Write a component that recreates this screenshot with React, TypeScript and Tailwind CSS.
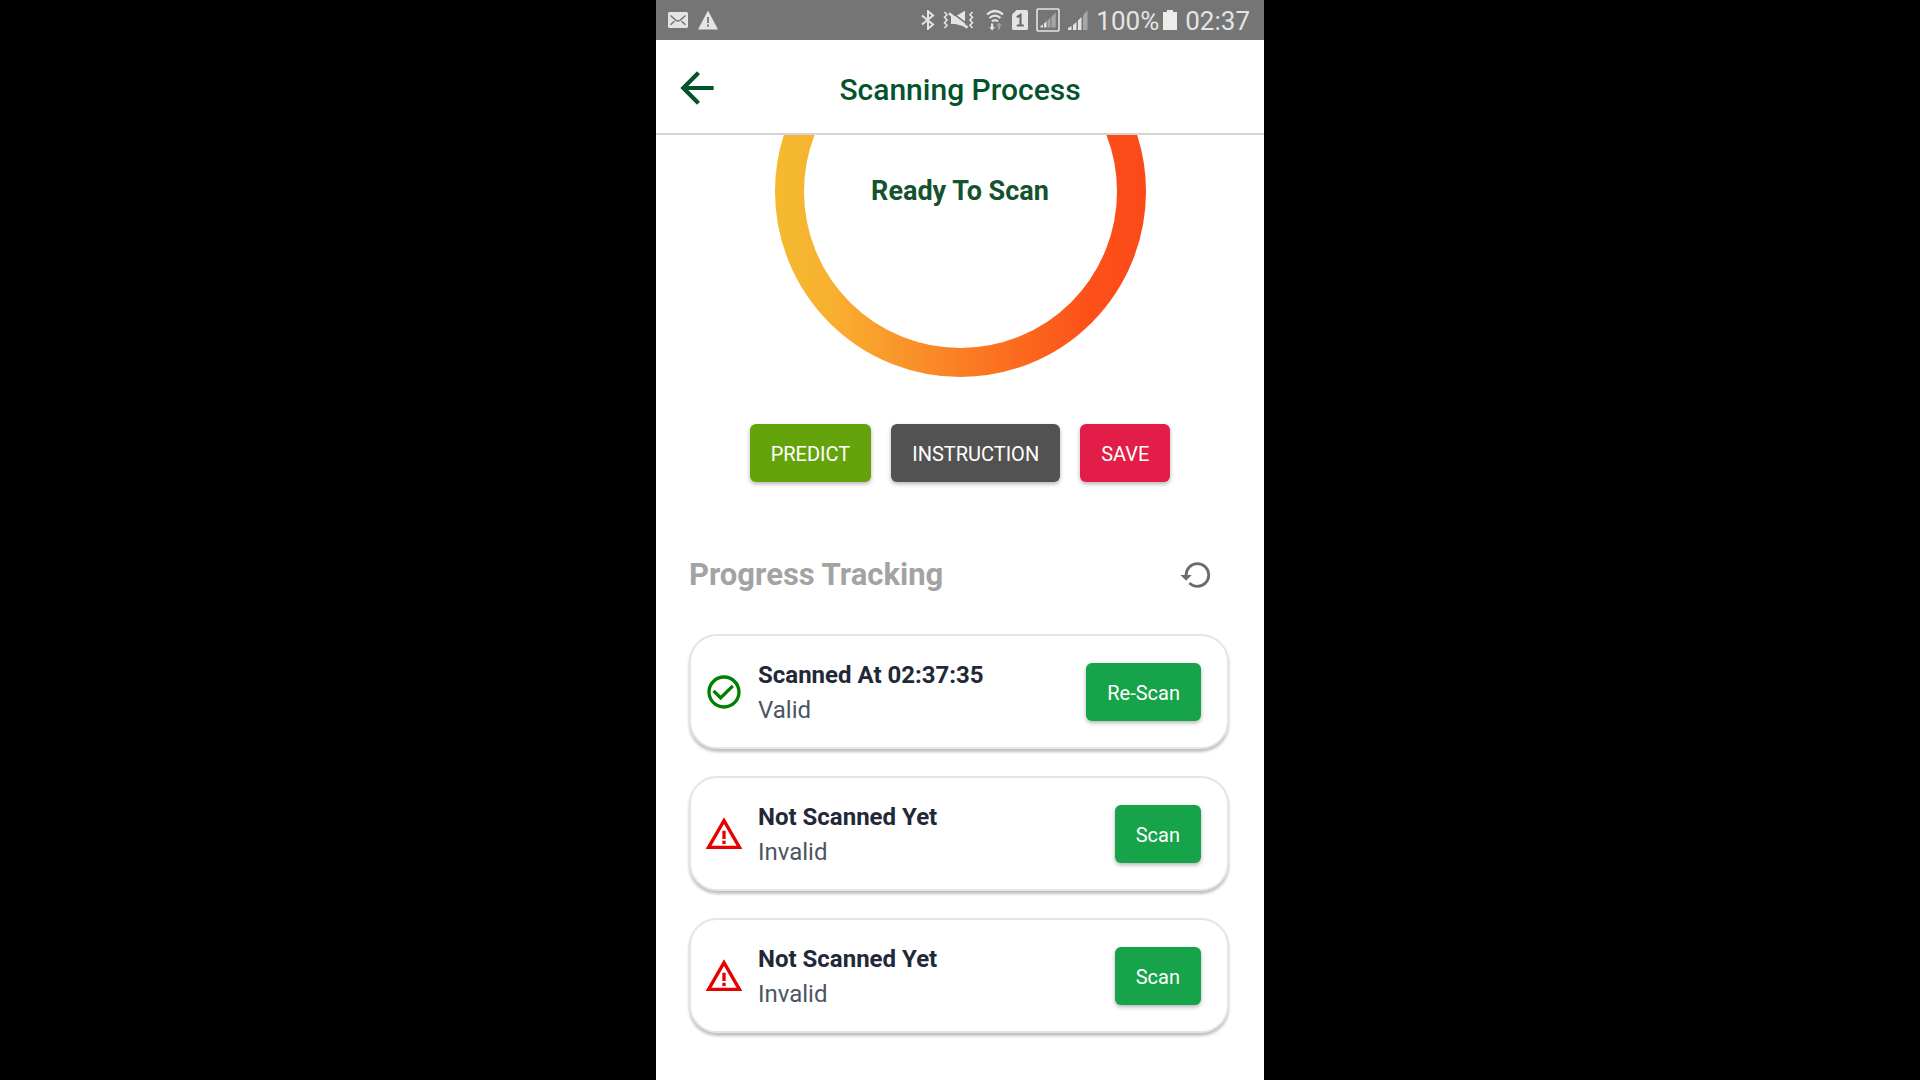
import React from "react";
import { MdArrowBack, MdCheckCircleOutline, MdWarningAmber } from "react-icons/md";

type Scan = { id: number; title: string; status: string; valid: boolean; action: string };

const scans: Scan[] = [
  { id: 1, title: "Scanned At 02:37:35", status: "Valid", valid: true, action: "Re-Scan" },
  { id: 2, title: "Not Scanned Yet", status: "Invalid", valid: false, action: "Scan" },
  { id: 3, title: "Not Scanned Yet", status: "Invalid", valid: false, action: "Scan" },
];

function MailIcon() {
  return (
    <svg viewBox="0 0 20 16" className="h-4 w-5" aria-hidden="true">
      <rect width="20" height="16" rx="1.5" fill="#e4e4e4" />
      <path d="M2.5 3.5 8 8.3q2 1.2 4 0l5.5-4.8M2.5 12.8l4-3.6M17.5 12.8l-4-3.6" fill="none" stroke="#757575" strokeWidth="1.5" />
    </svg>
  );
}

function AlertIcon() {
  return (
    <svg viewBox="0 0 20 20" className="size-5" aria-hidden="true">
      <path d="M10 .5 20 19.5H0Z" fill="#e4e4e4" />
      <path d="M10 7v6M10 14.5v2.2" stroke="#757575" strokeWidth="1.8" />
    </svg>
  );
}

function BluetoothIcon() {
  return (
    <svg viewBox="0 0 14 20" className="h-5 w-3.5" aria-hidden="true">
      <path d="m1 5.5 11 9-5 4.3V1.2l5 4.3-11 9" fill="none" stroke="#e4e4e4" strokeWidth="2" />
    </svg>
  );
}

function MuteVibrateIcon() {
  return (
    <svg viewBox="0 0 31 20" className="h-5 w-[31px]" aria-hidden="true">
      <g fill="none" stroke="#e4e4e4" strokeWidth="1.6">
        <path d="m1.5 2 2.5 2.7-2.5 2.6L4 10l-2.5 2.7L4 15.3 1.5 18" />
        <path d="M29.5 2 27 4.7l2.5 2.6L27 10l2.5 2.7-2.5 2.6 2.5 2.7" />
      </g>
      <path d="M8 6h5L22 .8v16L12.500 14H8Z" fill="#e4e4e4" />
      <path d="M8.200 2.200 25 14.600" stroke="#757575" strokeWidth="1.6" />
      <path d="M6 3.200 24.500 17.800" stroke="#e4e4e4" strokeWidth="2.6" />
    </svg>
  );
}

function WifiIcon() {
  return (
    <svg viewBox="0 0 18 22" className="h-[22px] w-[18px]" aria-hidden="true">
      <g fill="none" stroke="#e4e4e4" strokeWidth="2.2">
        <path d="M1 5.5q8-7 16 0M3.5 9q5.5-4.800 11 0M6 12.400q3-2.600 6 0" />
      </g>
      <path d="M5 14.500h2.200v3.500h1.800L6.100 21.500 3.200 18H5Z" fill="#e4e4e4" />
      <path d="M12 20.500h2.200V17H16l-2.900-3.500-2.900 3.500H12Z" fill="#a0a0a0" />
    </svg>
  );
}

function SimIcon() {
  return (
    <svg viewBox="0 0 16 20" className="h-5 w-4" aria-hidden="true">
      <path d="M4.5 0H14.5Q16 0 16 1.5v17q0 1.5-1.5 1.5h-13Q0 20 0 18.5V4.5Z" fill="#e4e4e4" />
      <path d="M4.8 7.2 8.5 5V15.5M4.8 15.5h7" fill="none" stroke="#6a6a6a" strokeWidth="2.2" />
    </svg>
  );
}

function BoxedSignalIcon() {
  return (
    <svg viewBox="0 0 24 24" className="size-6" aria-hidden="true">
      <rect x="1" y="1" width="22" height="22" rx="1" fill="none" stroke="#e4e4e4" strokeWidth="1.6" />
      <path d="M4.5 19.5v-1.5l2.5-1.5v3ZM8 19.5V15.5l2.5-2.3v6.3Z" fill="#e4e4e4" />
      <path d="M11.5 19.5v-7l3-2.7v9.7ZM15.5 19.5V8.8l4.2-4.3v15Z" fill="#a6a6a6" />
    </svg>
  );
}

function SignalIcon() {
  return (
    <svg viewBox="0 0 20 20" className="size-5" aria-hidden="true">
      <path d="M0 20v-2l3.5-2V20ZM5 20v-5l3.5-3V20ZM10 20V10.5l3.5-3.5V20Z" fill="#e4e4e4" />
      <path d="M15 20V5.5L19.5 0V20Z" fill="#a6a6a6" />
    </svg>
  );
}

function BatteryIcon() {
  return (
    <svg viewBox="0 0 14 20" className="h-5 w-3.5" aria-hidden="true">
      <path d="M4 0h6v2h4v18H0V2h4Z" fill="#ececec" />
    </svg>
  );
}

function RestoreIcon() {
  return (
    <svg viewBox="0 0 24 24" className="size-[34px]" fill="#6b6b6b" aria-hidden="true">
      <path d="M13 3A9 9 0 0 0 4 12H1L4.89 15.89 4.96 16.03 9 12H6A7 7 0 0 1 13 5 7 7 0 0 1 20 12 7 7 0 0 1 13 19C11.07 19 9.32 18.21 8.06 16.94L6.64 18.36C8.27 20 10.5 21 13 21A9 9 0 0 0 22 12 9 9 0 0 0 13 3Z" />
    </svg>
  );
}

function StatusBar() {
  return (
    <div className="flex h-10 shrink-0 items-center justify-between bg-[#757575] pr-3.5 pl-3 text-[#e4e4e4]">
      <div className="flex items-center gap-2.5">
        <MailIcon />
        <AlertIcon />
      </div>
      <div className="flex items-center">
        <div className="mr-2 flex items-center gap-2">
          <div className="mr-1 flex items-center gap-2">
            <BluetoothIcon />
            <MuteVibrateIcon />
          </div>
          <WifiIcon />
          <SimIcon />
          <BoxedSignalIcon />
          <SignalIcon />
        </div>
        <span className="pt-0.5 text-[26px] leading-9">100%</span>
        <span className="mr-2 ml-1">
          <BatteryIcon />
        </span>
        <span className="pt-0.5 text-[26px] leading-9">02:37</span>
      </div>
    </div>
  );
}

function Header() {
  return (
    <header className="grid h-[95px] shrink-0 grid-cols-[50px_1fr_50px] items-center border-b-2 border-[#d4d4d4] px-4 pt-0.5">
      <button type="button" aria-label="Back" className="text-[#04532b]">
        <MdArrowBack className="size-[50px]" />
      </button>
      <h1 className="pt-1 text-center text-[30px] leading-9 font-medium text-[#04532b]">Scanning Process</h1>
    </header>
  );
}

function ProgressRing() {
  return (
    <div className="-mt-[129px] grid shrink-0 place-items-center">
      <svg viewBox="0 0 371 371" className="col-start-1 row-start-1 size-[371px]" aria-hidden="true">
        <defs>
          <linearGradient id="ring" gradientUnits="userSpaceOnUse" x1="0" y1="0" x2="371" y2="0">
            <stop offset="0" stopColor="#f3ba2f" />
            <stop offset="0.15" stopColor="#f8b030" />
            <stop offset="0.5" stopColor="#fb7f24" />
            <stop offset="0.85" stopColor="#fd5019" />
            <stop offset="1" stopColor="#fb4a19" />
          </linearGradient>
        </defs>
        <circle cx="185.5" cy="185.5" r="171" fill="none" stroke="url(#ring)" strokeWidth="29" />
      </svg>
      <p className="col-start-1 row-start-1 pb-0.5 text-[27px] leading-8 font-bold text-[#14532d]">Ready To Scan</p>
    </div>
  );
}

const buttonBase = "h-[58px] rounded-md px-[21px] pt-0.5 text-xl text-white shadow-[0_2px_4px_rgba(0,0,0,0.3)]";

function ScanCard({ scan }: { scan: Scan }) {
  return (
    <li className="flex h-[115px] items-center rounded-[28px] border-2 border-[#e5e5e5] bg-white pr-[26px] pl-[13px] shadow-[0_3px_3px_rgba(0,0,0,0.25)]">
      {scan.valid ? (
        <MdCheckCircleOutline className="size-10 text-[#008000]" />
      ) : (
        <MdWarningAmber className="size-10 text-[#e60000]" />
      )}
      <div className="ml-3.5 flex-1 pt-0.5 text-2xl leading-[35px]">
        <h3 className="font-bold text-[#1f2937]">{scan.title}</h3>
        <p className="text-[#4b5563]">{scan.status}</p>
      </div>
      <button type="button" className={`${buttonBase} bg-[#16a34a]`}>
        {scan.action}
      </button>
    </li>
  );
}

export default function App() {
  return (
    <div className="flex min-h-screen justify-center bg-black font-['Roboto',sans-serif]">
      <div className="flex w-full max-w-[608px] flex-col bg-white">
        <StatusBar />
        <Header />
        <main className="flex flex-1 flex-col overflow-hidden">
          <ProgressRing />
          <div className="mt-[47px] flex justify-center gap-5">
            <button type="button" className={`${buttonBase} bg-[#65a30d]`}>PREDICT</button>
            <button type="button" className={`${buttonBase} bg-[#525252]`}>INSTRUCTION</button>
            <button type="button" className={`${buttonBase} bg-[#e11d48]`}>SAVE</button>
          </div>
          <section className="mt-[73px] pr-[35px] pl-[33px]">
            <div className="flex h-10 items-center justify-between pr-4">
              <h2 className="text-[31px] leading-10 font-bold text-[#a3a3a3]">Progress Tracking</h2>
              <button type="button" aria-label="Reset progress">
                <RestoreIcon />
              </button>
            </div>
            <ul className="mt-[39px] flex flex-col gap-[27px] pb-12">
              {scans.map((scan) => (
                <ScanCard key={scan.id} scan={scan} />
              ))}
            </ul>
          </section>
        </main>
      </div>
    </div>
  );
}
